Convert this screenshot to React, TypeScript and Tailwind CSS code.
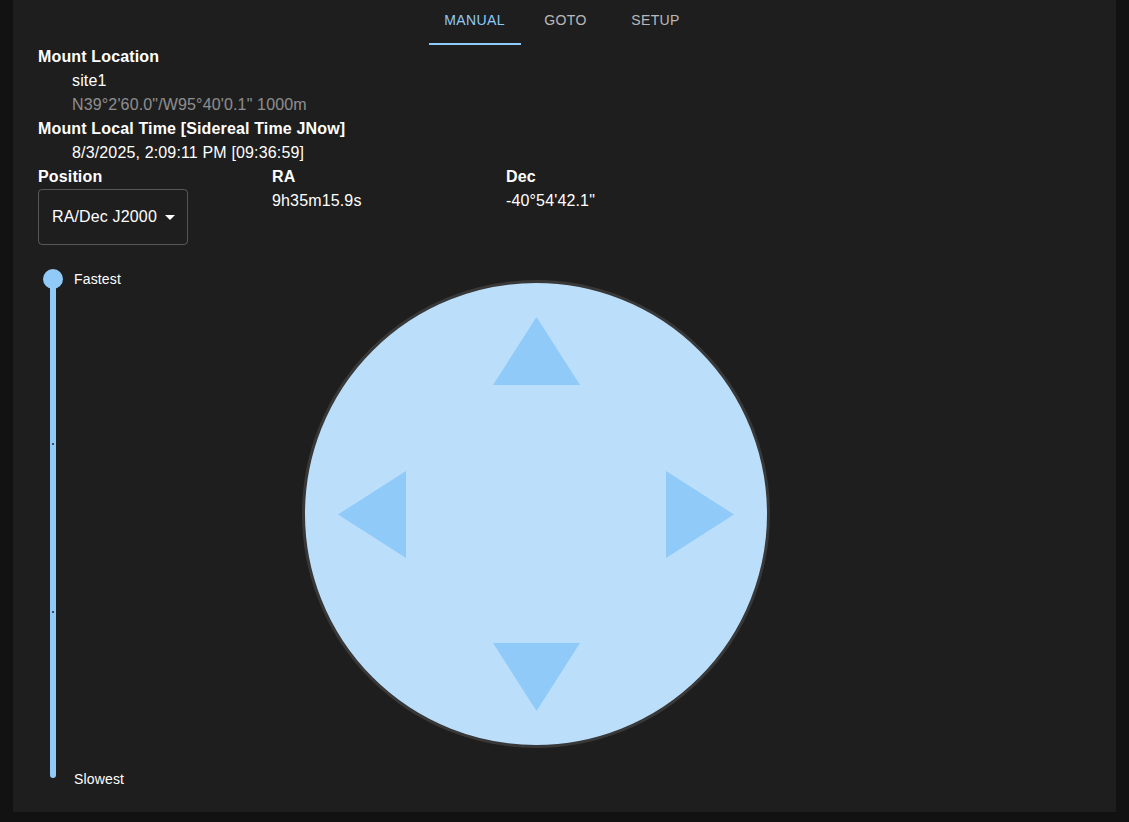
const tabs = ['Manual', 'Goto', 'Setup'];

function Arrow({ dir }: { dir: 'up' | 'down' | 'left' | 'right' }) {
  const points = {
    up: '43.5,0 87,68 0,68',
    down: '0,0 87,0 43.5,68',
    left: '0,43.5 68,0 68,87',
    right: '0,0 68,43.5 0,87',
  }[dir];
  const vertical = dir === 'up' || dir === 'down';
  return (
    <button type="button" className="block">
      <svg width={vertical ? 87 : 68} height={vertical ? 68 : 87} viewBox={vertical ? '0 0 87 68' : '0 0 68 87'}>
        <polygon points={points} fill="#90caf9" />
      </svg>
    </button>
  );
}

export default function App() {
  return (
    <div className="min-h-screen bg-[#121212] px-[13px] pb-[10px] font-['Liberation_Sans',Arial,sans-serif]">
      <div className="h-[812px] bg-[#1e1e1e] px-[25px] text-white">
        {/* Tabs */}
        <div className="flex h-[45px] justify-center">
          {tabs.map((t, i) => (
            <div
              key={t}
              className={`flex flex-col items-center justify-end text-sm uppercase tracking-[0.4px] ${
                i === 0 ? 'w-[92px] text-[#90caf9]' : 'w-[90px] text-white/70'
              }`}
            >
              <span className="pb-[13px] leading-5">{t}</span>
              <span className={`h-[2px] w-full ${i === 0 ? 'bg-[#90caf9]' : ''}`} />
            </div>
          ))}
        </div>

        {/* Mount info */}
        <div className="text-base leading-6 tracking-[0.15px]">
          <p className="font-bold">Mount Location</p>
          <p className="pl-[34px]">site1</p>
          <p className="pl-[34px] text-white/50">N39°2'60.0"/W95°40'0.1" 1000m</p>
          <p className="font-bold">Mount Local Time [Sidereal Time JNow]</p>
          <p className="pl-[34px]">8/3/2025, 2:09:11 PM [09:36:59]</p>
        </div>

        {/* Position */}
        <div className="flex text-base leading-6 tracking-[0.15px]">
          <div className="w-[234px]">
            <p className="font-bold">Position</p>
            <div className="flex h-[56px] w-[150px] items-center justify-between rounded border border-white/25 pl-[13px] pr-[5px]">
              <span>RA/Dec J2000</span>
              <svg width="24" height="24" viewBox="0 0 24 24">
                <path d="M7 10l5 5 5-5z" fill="#fff" />
              </svg>
            </div>
          </div>
          <div className="w-[234px]">
            <p className="font-bold">RA</p>
            <p>9h35m15.9s</p>
          </div>
          <div className="w-[234px]">
            <p className="font-bold">Dec</p>
            <p>-40°54'42.1"</p>
          </div>
        </div>

        {/* Slider + pad */}
        <div className="mt-[24px] flex">
          <div className="flex h-[520px] w-[110px]">
            <div className="flex w-[30px] flex-col items-center">
              <span className="relative z-10 h-[20px] w-[20px] rounded-full bg-[#90caf9]" />
              <div className="-mt-[11px] flex h-[500px] w-[6px] flex-col items-center justify-evenly rounded-sm bg-[#90caf9]">
                <span className="h-[2px] w-[2px] bg-[#3d5468]" />
                <span className="h-[2px] w-[2px] bg-[#3d5468]" />
              </div>
            </div>
            <div className="ml-[6px] flex flex-col justify-between text-sm leading-5 tracking-[0.15px]">
              <span>Fastest</span>
              <span>Slowest</span>
            </div>
          </div>
          <div className="ml-[154px] mt-[11px] flex h-[468px] w-[468px] flex-col items-center justify-between rounded-full border-[3px] border-[#383838] bg-[#bbdefb] py-[34px]">
            <Arrow dir="up" />
            <div className="flex w-full justify-between px-[33px]">
              <Arrow dir="left" />
              <Arrow dir="right" />
            </div>
            <Arrow dir="down" />
          </div>
        </div>
      </div>
    </div>
  );
}
